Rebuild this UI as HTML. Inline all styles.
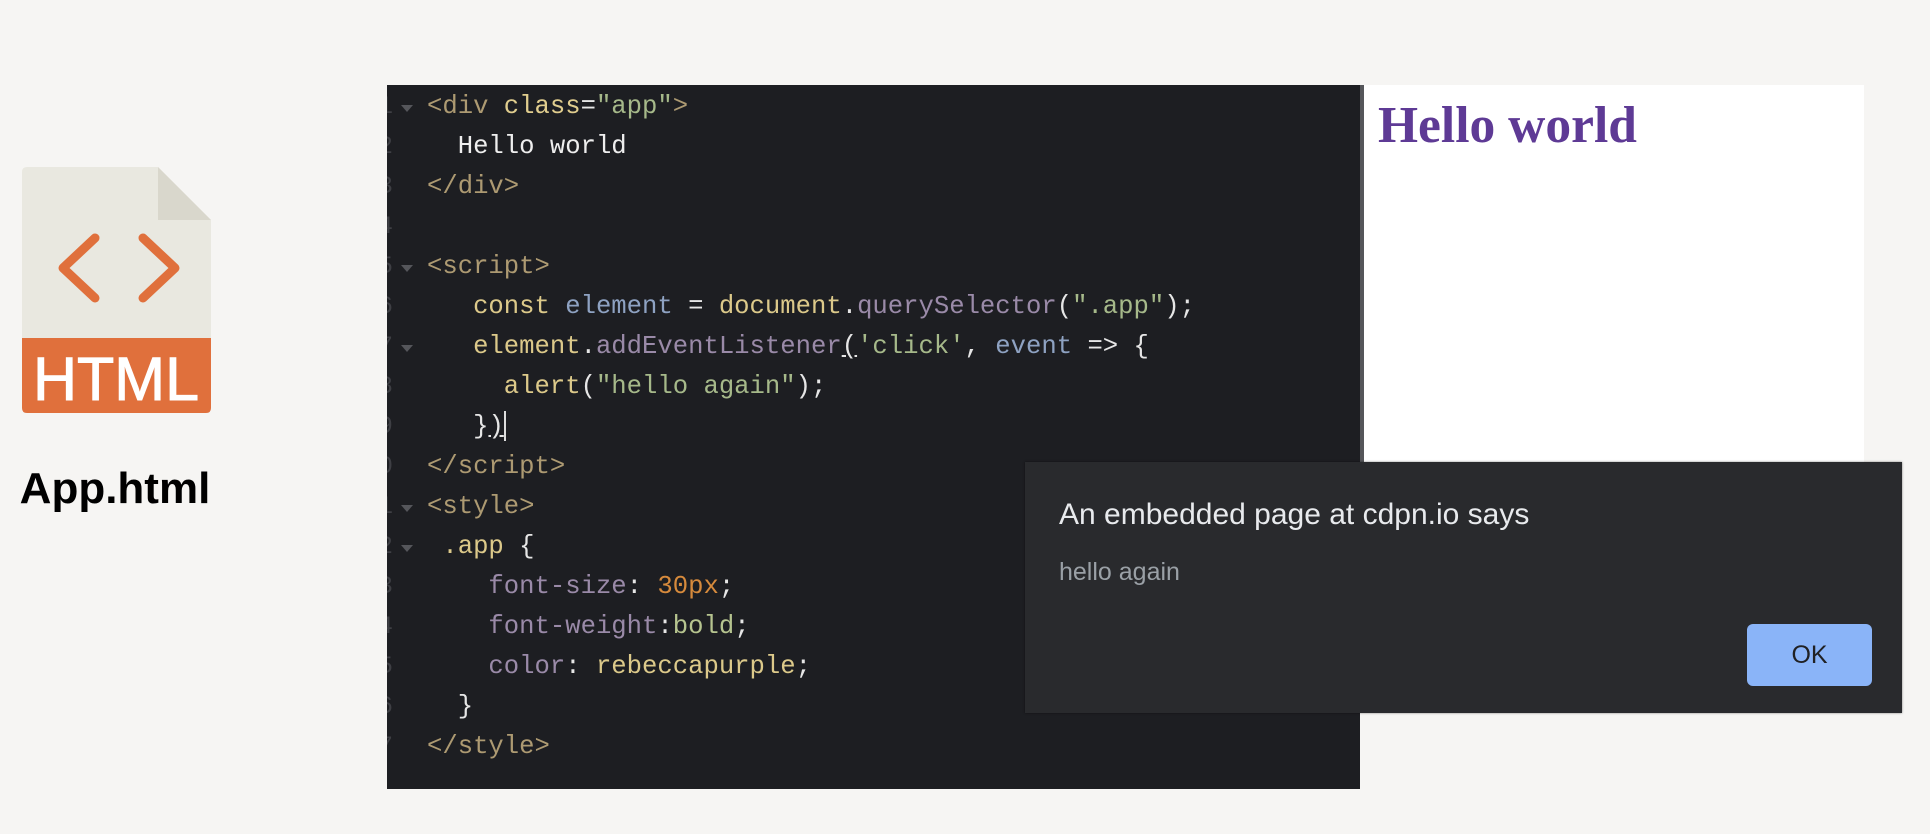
<!DOCTYPE html>
<html><head><meta charset="utf-8">
<style>
html,body{margin:0;padding:0;}
body{width:1930px;height:834px;background:#f6f5f3;position:relative;overflow:hidden;font-family:"Liberation Sans",sans-serif;}
.abs{position:absolute;}
#editor{left:387px;top:85px;width:973px;height:704px;background:#1d1e22;overflow:hidden;}
#sep{left:1360px;top:85px;width:4px;height:377px;background:#55565a;}
#preview{left:1364px;top:85px;width:500px;height:377px;background:#fff;}
.hw{left:1378px;top:96px;font-family:"Liberation Serif",serif;font-weight:bold;font-size:51.5px;color:#5e3a95;line-height:60px;}
.code{position:absolute;left:40px;top:0;font-family:"Liberation Mono",monospace;font-size:25.6px;white-space:pre;}
.ln{position:absolute;left:0;height:40px;line-height:40px;}
.num{position:absolute;left:-9px;font-family:"Liberation Mono",monospace;font-size:25px;color:#3e3f44;line-height:40px;}
.arr{position:absolute;left:14px;width:0;height:0;border-left:6px solid transparent;border-right:6px solid transparent;border-top:7px solid #55565b;}
.t{color:#ad9a72}.a{color:#e0cd8e}.s{color:#a6b98a}.w{color:#eeeeee}.k{color:#dcc98a}.v{color:#8ea2c2}.m{color:#9a8aa8}.p{color:#e6e6e6}.o{color:#d68a3c}.g{color:#b6c48f}
#dlg{left:1025px;top:462px;width:877px;height:251px;background:#292a2d;box-shadow:0 0 2px rgba(0,0,0,.5);}
.dt{left:34px;top:36px;font-size:30px;color:#e8eaed;}
.dm{left:34px;top:96px;font-size:25px;color:#9aa0a6;}
.ok{left:722px;top:162px;width:125px;height:62px;background:#8ab4f8;border-radius:6px;color:#202124;font-size:25px;line-height:62px;text-align:center;}
</style></head><body>

<svg class="abs" style="left:0;top:0" width="240" height="520" viewBox="0 0 240 520">
  <path d="M27 167 H158 L211 220 V338 H22 V172 Q22 167 27 167 Z" fill="#e9e8e0"/>
  <path d="M158 167 L211 220 H158 Z" fill="#d9d7cc"/>
  <path d="M22 338 H211 V408 Q211 413 206 413 H27 Q22 413 22 408 Z" fill="#e0703c"/>
  <path d="M95 238 L63 268 L95 298" fill="none" stroke="#e0703c" stroke-width="9" stroke-linecap="round" stroke-linejoin="round"/>
  <path d="M143 238 L175 268 L143 298" fill="none" stroke="#e0703c" stroke-width="9" stroke-linecap="round" stroke-linejoin="round"/>
  <text x="116" y="400" text-anchor="middle" font-family="Liberation Sans, sans-serif" font-size="61" fill="#fff" stroke="#fff" stroke-width="1">HTML</text>
  <text x="115" y="503" text-anchor="middle" font-family="Liberation Sans, sans-serif" font-size="44" font-weight="bold" fill="#000">App.html</text>
</svg>

<div id="editor" class="abs">
  <div class="num" style="top:2px">1</div><div class="num" style="top:42px">2</div><div class="num" style="top:82px">3</div><div class="num" style="top:122px">4</div><div class="num" style="top:162px">5</div><div class="num" style="top:202px">6</div><div class="num" style="top:242px">7</div><div class="num" style="top:282px">8</div><div class="num" style="top:322px">9</div><div class="num" style="top:362px">0</div><div class="num" style="top:402px">1</div><div class="num" style="top:442px">2</div><div class="num" style="top:482px">3</div><div class="num" style="top:522px">4</div><div class="num" style="top:562px">5</div><div class="num" style="top:602px">6</div><div class="num" style="top:642px">7</div>
  <div class="arr" style="top:20px"></div><div class="arr" style="top:180px"></div><div class="arr" style="top:260px"></div><div class="arr" style="top:420px"></div><div class="arr" style="top:460px"></div>
  <div class="code">
<div class="ln" style="top:2px"><span class="t">&lt;div </span><span class="a">class</span><span class="p">=</span><span class="s">"app"</span><span class="t">&gt;</span></div>
<div class="ln" style="top:42px"><span class="w">  Hello world</span></div>
<div class="ln" style="top:82px"><span class="t">&lt;/div&gt;</span></div>
<div class="ln" style="top:162px"><span class="t">&lt;script&gt;</span></div>
<div class="ln" style="top:202px"><span class="k">   const </span><span class="v">element</span><span class="p"> = </span><span class="k">document</span><span class="p">.</span><span class="m">querySelector</span><span class="p">(</span><span class="s">".app"</span><span class="p">);</span></div>
<div class="ln" style="top:242px"><span class="k">   element</span><span class="p">.</span><span class="m">addEventListener</span><span class="p" style="text-decoration:underline">(</span><span class="s">'click'</span><span class="p">, </span><span class="v">event</span><span class="p"> =&gt; {</span></div>
<div class="ln" style="top:282px"><span class="k">     alert</span><span class="p">(</span><span class="s">"hello again"</span><span class="p">);</span></div>
<div class="ln" style="top:322px"><span class="p">   }<span style="text-decoration:underline">)</span></span><span style="display:inline-block;width:2px;height:30px;background:#ddd;vertical-align:middle"></span></div>
<div class="ln" style="top:362px"><span class="t">&lt;/script&gt;</span></div>
<div class="ln" style="top:402px"><span class="t">&lt;style&gt;</span></div>
<div class="ln" style="top:442px"><span class="k"> .app </span><span class="p">{</span></div>
<div class="ln" style="top:482px"><span class="m">    font-size</span><span class="p">: </span><span class="o">30px</span><span class="p">;</span></div>
<div class="ln" style="top:522px"><span class="m">    font-weight</span><span class="p">:</span><span class="g">bold</span><span class="p">;</span></div>
<div class="ln" style="top:562px"><span class="m">    color</span><span class="p">: </span><span class="k">rebeccapurple</span><span class="p">;</span></div>
<div class="ln" style="top:602px"><span class="p">  }</span></div>
<div class="ln" style="top:642px"><span class="t">&lt;/style&gt;</span></div>
  </div>
</div>
<div id="sep" class="abs"></div>
<div id="preview" class="abs"></div>
<div class="abs hw">Hello world</div>

<div id="dlg" class="abs">
  <div class="abs dt">An embedded page at cdpn.io says</div>
  <div class="abs dm">hello again</div>
  <div class="abs ok">OK</div>
</div>
</body></html>
